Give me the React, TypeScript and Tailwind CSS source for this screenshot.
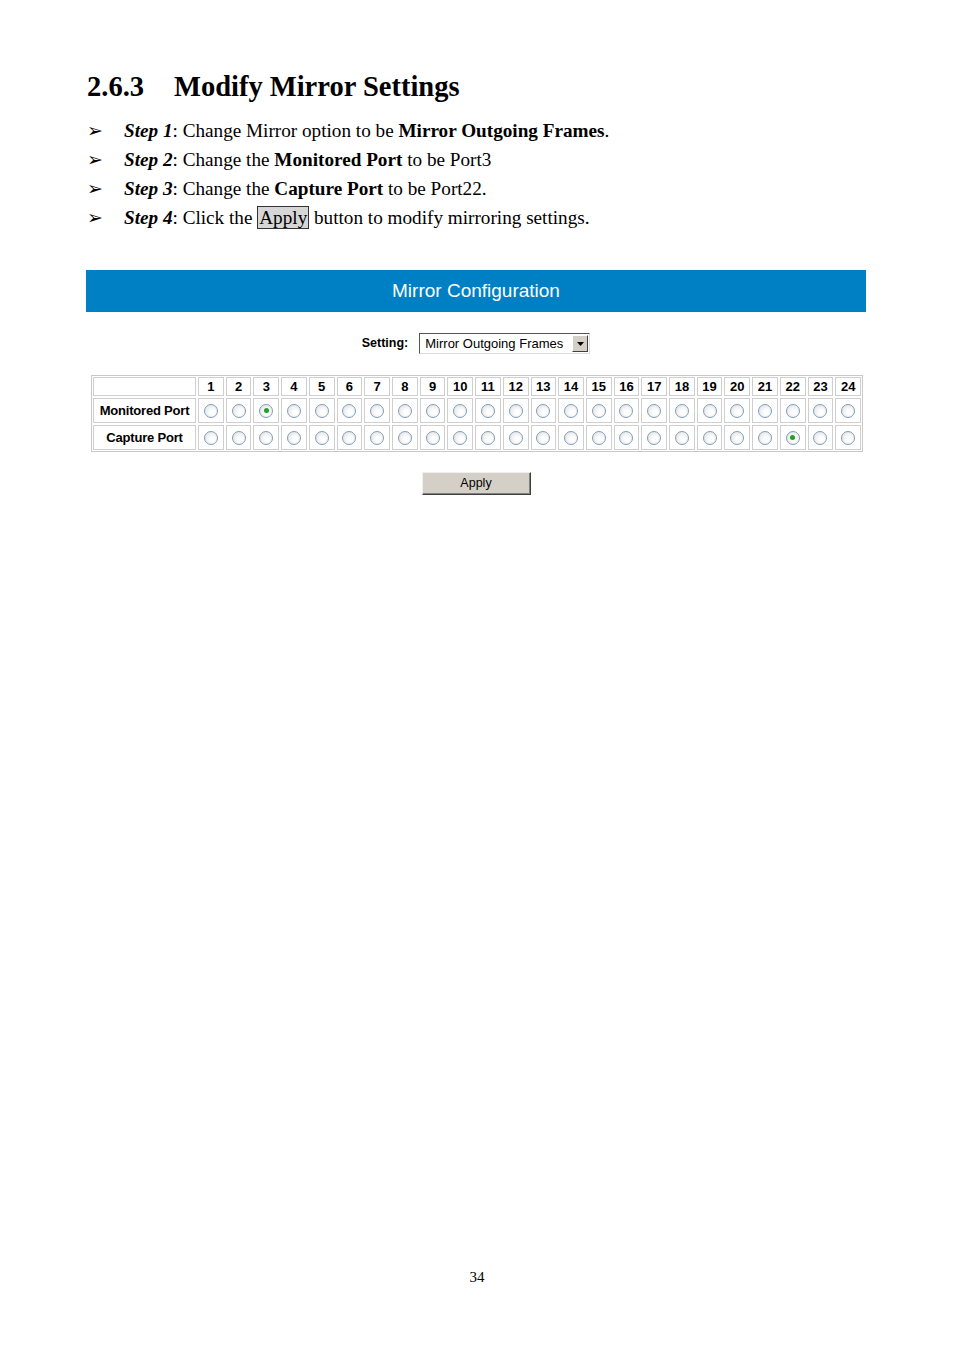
import React from "react";

const serif = { fontFamily: '"Liberation Serif", "Times New Roman", serif' };
const sans = { fontFamily: '"Liberation Sans", Arial, sans-serif' };

function Radio({ checked }: { checked?: boolean }) {
  return (
    <span className="inline-flex h-[14px] w-[14px] items-center justify-center rounded-full border border-[#7f9db9] bg-[radial-gradient(circle_at_60%_60%,#ffffff_20%,#dcdcdc_100%)]">
      {checked && <span className="h-[5px] w-[5px] rounded-full bg-[#21a121]" />}
    </span>
  );
}

function Bullet() {
  return (
    <span className="inline-block w-[37px] text-[19px] leading-none" style={{ fontFamily: '"DejaVu Sans", sans-serif' }}>
      ➢
    </span>
  );
}

export default function App() {
  const ports = Array.from({ length: 24 }, (_, i) => i + 1);
  return (
    <div className="min-h-[1350px] w-[954px] bg-white text-black">
      <div className="px-[86px] pt-[70px]">
        <h1 className="flex text-[28.5px] font-bold leading-[34px]" style={serif}>
          <span className="w-[88px] pl-[1px]">2.6.3</span>
          <span>Modify Mirror Settings</span>
        </h1>
        <ul className="mt-[12px] text-[19.2px] leading-[29px]" style={serif}>
          <li className="flex items-center pl-[1px]">
            <Bullet />
            <span>
              <b><i>Step 1</i></b>: Change Mirror option to be <b>Mirror Outgoing Frames</b>.
            </span>
          </li>
          <li className="flex items-center pl-[1px]">
            <Bullet />
            <span>
              <b><i>Step 2</i></b>: Change the <b>Monitored Port</b> to be Port3
            </span>
          </li>
          <li className="flex items-center pl-[1px]">
            <Bullet />
            <span>
              <b><i>Step 3</i></b>: Change the <b>Capture Port</b> to be Port22.
            </span>
          </li>
          <li className="flex items-center pl-[1px]">
            <Bullet />
            <span>
              <b><i>Step 4</i></b>: Click the{" "}
              <span className="border border-[#333] bg-[#d6d6d6] px-[1px]">Apply</span> button to modify mirroring settings.
            </span>
          </li>
        </ul>

        <div className="mt-[38px] w-[780px]" style={sans}>
          <div className="flex h-[42px] items-center justify-center bg-[#0080c4] text-[19px] text-white">
            Mirror Configuration
          </div>

          <div className="mt-[21px] flex items-center justify-center">
            <span className="mr-[11px] text-[12.5px] font-bold">Setting:</span>
            <div className="flex h-[21px] w-[171px] items-center border-t border-l border-t-[#555] border-l-[#555] border-b border-r border-b-[#ddd] border-r-[#ddd] bg-white pr-[1px]">
              <span className="flex-1 pl-[5px] text-[13px] text-black">Mirror Outgoing Frames</span>
              <span className="flex h-[17px] w-[16px] items-center justify-center border border-t-[#fff] border-l-[#fff] border-b-[#404040] border-r-[#404040] bg-[#d4d0c8]">
                <svg width="7" height="4" viewBox="0 0 7 4">
                  <path d="M0 0h7L3.5 4z" fill="#000" />
                </svg>
              </span>
            </div>
          </div>

          <div className="mt-[21px] ml-[5px] w-[772px] border border-[#c9c9c9] p-[1px]">
            <div className="grid grid-cols-[103px_repeat(24,minmax(0,1fr))] gap-[2px]">
              <div className="h-[19px] border border-[#cfcfcf]" />
              {ports.map((p) => (
                <div key={"h" + p} className="flex h-[19px] items-center justify-center border border-[#cfcfcf] text-[13px] font-bold">
                  {p}
                </div>
              ))}
              <div className="flex h-[25px] items-center justify-center border border-[#cfcfcf] text-[13px] font-bold tracking-[-0.2px]">
                Monitored Port
              </div>
              {ports.map((p) => (
                <div key={"m" + p} className="flex h-[25px] items-center justify-center border border-[#cfcfcf]">
                  <Radio checked={p === 3} />
                </div>
              ))}
              <div className="flex h-[25px] items-center justify-center border border-[#cfcfcf] text-[13px] font-bold tracking-[-0.2px]">
                Capture Port
              </div>
              {ports.map((p) => (
                <div key={"c" + p} className="flex h-[25px] items-center justify-center border border-[#cfcfcf]">
                  <Radio checked={p === 22} />
                </div>
              ))}
            </div>
          </div>

          <div className="mt-[20px] flex justify-center">
            <button className="h-[23px] w-[109px] border border-t-[#f0f0f0] border-l-[#f0f0f0] border-b-[#404040] border-r-[#404040] bg-[#d4d0c8] text-[12.5px] text-black shadow-[inset_-1px_-1px_0_#808080]">
              Apply
            </button>
          </div>
        </div>
      </div>

      <div className="mt-[771px] text-center text-[15px]" style={serif}>
        34
      </div>
    </div>
  );
}
